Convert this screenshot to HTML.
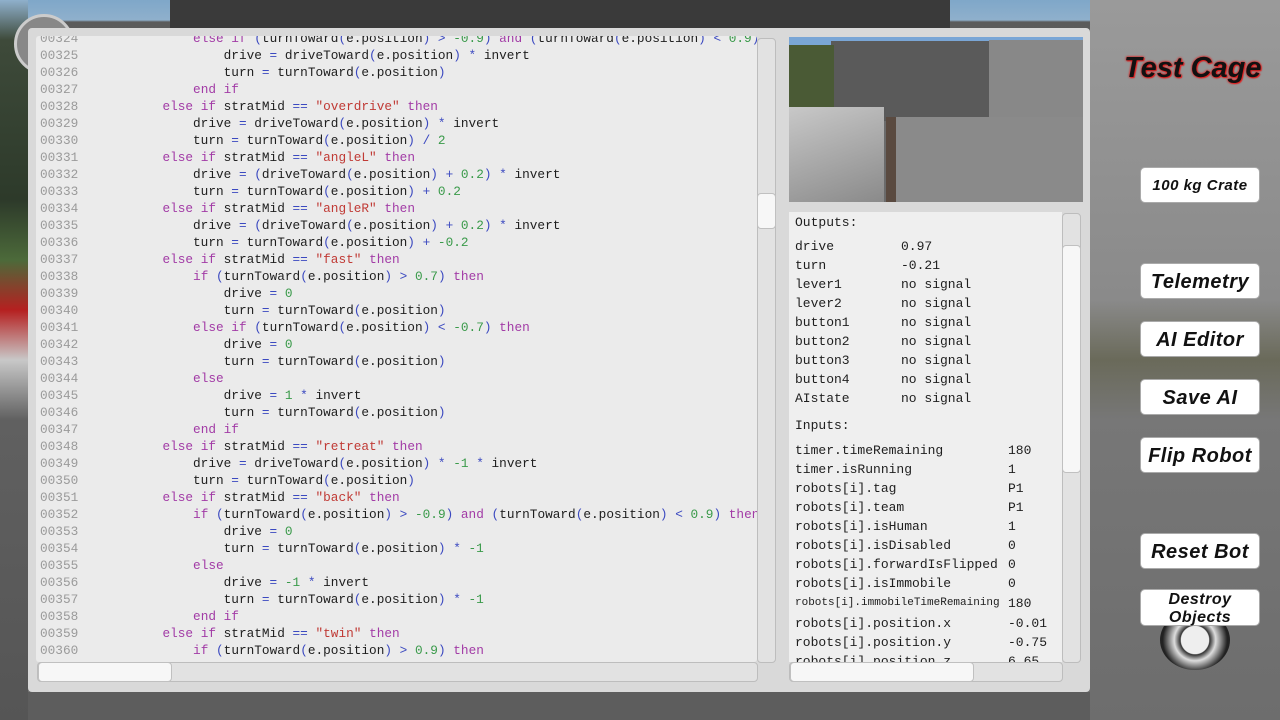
<!DOCTYPE html>
<html><head><meta charset="utf-8"><style>
*{margin:0;padding:0;box-sizing:border-box}
body{width:1280px;height:720px;overflow:hidden;position:relative;font-family:"Liberation Mono",monospace;
background:linear-gradient(180deg,#7fa7c9 0px,#8fb0cc 20px,#5b5b5b 22px,#6a6a6a 280px,#7a7a7a 400px,#6e6e6e 720px);}
.abs{position:absolute}
#bgL{left:0;top:0;width:28px;height:720px;background:linear-gradient(180deg,#8fb0cc 0,#3e4a3a 40px,#2d3a2a 200px,#4c6a3a 260px,#b52020 310px,#c8c8c8 360px,#606060 420px,#555 720px)}
#bgR{left:1090px;top:0;width:190px;height:720px;background:linear-gradient(180deg,#9a9a9a 0,#8a8a8a 300px,#6a6a5a 360px,#777 420px,#6d6d6d 720px)}
#bgB{left:28px;top:692px;width:1062px;height:28px;background:#5d5d5d}
#bgT{left:170px;top:0;width:780px;height:28px;background:#3a3a3a}
#panel{left:28px;top:28px;width:1062px;height:664px;background:#d9d9d9;border-radius:4px}
#code{left:36px;top:36px;width:721px;height:626px;background:#ebebeb;overflow:hidden;border-radius:3px}
pre{position:absolute;left:4px;top:-6px;font-family:"Liberation Mono",monospace;font-size:12.75px;line-height:17px;color:#1e1e1e}
.ln{color:#9a9a9a}.k{color:#a23ba6}.s{color:#c03a35}.n{color:#3a9a4a}.o{color:#3b49c0}
.sb{background:#e2e2e2;border:1px solid #bdbdbd;border-radius:4px}
.th{background:#f7f7f7;border:1px solid #c0c0c0;border-radius:4px}
#out{left:789px;top:212px;width:273px;height:450px;background:#efefef;overflow:hidden;font-size:13px;color:#1e1e1e}
#out div{position:absolute;white-space:pre}
.btn{position:absolute;left:1140px;width:120px;height:36px;background:#fff;border-radius:5px;border:1px solid #aaa;
font-family:"Liberation Sans",sans-serif;font-style:italic;font-weight:bold;color:#111;text-align:center;line-height:36px;font-size:20px;letter-spacing:0.5px}
</style></head><body>
<div class="abs" id="bgL"></div><div class="abs" id="bgR"></div><div class="abs" id="bgB"></div><div class="abs" id="bgT"></div>
<div class="abs" style="left:14px;top:14px;width:60px;height:60px;border-radius:50%;border:3px solid #ccc;background:#888"></div>
<div class="abs" id="panel"></div>
<div class="abs" id="code"><pre><span class="ln">00324</span>               <span class="k">else if</span> <span class="o">(</span>turnToward<span class="o">(</span>e.position<span class="o">)</span> <span class="o">&gt;</span> <span class="n">-0.9</span><span class="o">)</span> <span class="k">and</span> <span class="o">(</span>turnToward<span class="o">(</span>e.position<span class="o">)</span> <span class="o">&lt;</span> <span class="n">0.9</span><span class="o">)</span> <span class="k">then</span>
<span class="ln">00325</span>                   drive <span class="o">=</span> driveToward<span class="o">(</span>e.position<span class="o">)</span> <span class="o">*</span> invert
<span class="ln">00326</span>                   turn <span class="o">=</span> turnToward<span class="o">(</span>e.position<span class="o">)</span>
<span class="ln">00327</span>               <span class="k">end if</span>
<span class="ln">00328</span>           <span class="k">else if</span> stratMid <span class="o">==</span> <span class="s">"overdrive"</span> <span class="k">then</span>
<span class="ln">00329</span>               drive <span class="o">=</span> driveToward<span class="o">(</span>e.position<span class="o">)</span> <span class="o">*</span> invert
<span class="ln">00330</span>               turn <span class="o">=</span> turnToward<span class="o">(</span>e.position<span class="o">)</span> <span class="o">/</span> <span class="n">2</span>
<span class="ln">00331</span>           <span class="k">else if</span> stratMid <span class="o">==</span> <span class="s">"angleL"</span> <span class="k">then</span>
<span class="ln">00332</span>               drive <span class="o">=</span> <span class="o">(</span>driveToward<span class="o">(</span>e.position<span class="o">)</span> <span class="o">+</span> <span class="n">0.2</span><span class="o">)</span> <span class="o">*</span> invert
<span class="ln">00333</span>               turn <span class="o">=</span> turnToward<span class="o">(</span>e.position<span class="o">)</span> <span class="o">+</span> <span class="n">0.2</span>
<span class="ln">00334</span>           <span class="k">else if</span> stratMid <span class="o">==</span> <span class="s">"angleR"</span> <span class="k">then</span>
<span class="ln">00335</span>               drive <span class="o">=</span> <span class="o">(</span>driveToward<span class="o">(</span>e.position<span class="o">)</span> <span class="o">+</span> <span class="n">0.2</span><span class="o">)</span> <span class="o">*</span> invert
<span class="ln">00336</span>               turn <span class="o">=</span> turnToward<span class="o">(</span>e.position<span class="o">)</span> <span class="o">+</span> <span class="n">-0.2</span>
<span class="ln">00337</span>           <span class="k">else if</span> stratMid <span class="o">==</span> <span class="s">"fast"</span> <span class="k">then</span>
<span class="ln">00338</span>               <span class="k">if</span> <span class="o">(</span>turnToward<span class="o">(</span>e.position<span class="o">)</span> <span class="o">&gt;</span> <span class="n">0.7</span><span class="o">)</span> <span class="k">then</span>
<span class="ln">00339</span>                   drive <span class="o">=</span> <span class="n">0</span>
<span class="ln">00340</span>                   turn <span class="o">=</span> turnToward<span class="o">(</span>e.position<span class="o">)</span>
<span class="ln">00341</span>               <span class="k">else if</span> <span class="o">(</span>turnToward<span class="o">(</span>e.position<span class="o">)</span> <span class="o">&lt;</span> <span class="n">-0.7</span><span class="o">)</span> <span class="k">then</span>
<span class="ln">00342</span>                   drive <span class="o">=</span> <span class="n">0</span>
<span class="ln">00343</span>                   turn <span class="o">=</span> turnToward<span class="o">(</span>e.position<span class="o">)</span>
<span class="ln">00344</span>               <span class="k">else</span>
<span class="ln">00345</span>                   drive <span class="o">=</span> <span class="n">1</span> <span class="o">*</span> invert
<span class="ln">00346</span>                   turn <span class="o">=</span> turnToward<span class="o">(</span>e.position<span class="o">)</span>
<span class="ln">00347</span>               <span class="k">end if</span>
<span class="ln">00348</span>           <span class="k">else if</span> stratMid <span class="o">==</span> <span class="s">"retreat"</span> <span class="k">then</span>
<span class="ln">00349</span>               drive <span class="o">=</span> driveToward<span class="o">(</span>e.position<span class="o">)</span> <span class="o">*</span> <span class="n">-1</span> <span class="o">*</span> invert
<span class="ln">00350</span>               turn <span class="o">=</span> turnToward<span class="o">(</span>e.position<span class="o">)</span>
<span class="ln">00351</span>           <span class="k">else if</span> stratMid <span class="o">==</span> <span class="s">"back"</span> <span class="k">then</span>
<span class="ln">00352</span>               <span class="k">if</span> <span class="o">(</span>turnToward<span class="o">(</span>e.position<span class="o">)</span> <span class="o">&gt;</span> <span class="n">-0.9</span><span class="o">)</span> <span class="k">and</span> <span class="o">(</span>turnToward<span class="o">(</span>e.position<span class="o">)</span> <span class="o">&lt;</span> <span class="n">0.9</span><span class="o">)</span> <span class="k">then</span>
<span class="ln">00353</span>                   drive <span class="o">=</span> <span class="n">0</span>
<span class="ln">00354</span>                   turn <span class="o">=</span> turnToward<span class="o">(</span>e.position<span class="o">)</span> <span class="o">*</span> <span class="n">-1</span>
<span class="ln">00355</span>               <span class="k">else</span>
<span class="ln">00356</span>                   drive <span class="o">=</span> <span class="n">-1</span> <span class="o">*</span> invert
<span class="ln">00357</span>                   turn <span class="o">=</span> turnToward<span class="o">(</span>e.position<span class="o">)</span> <span class="o">*</span> <span class="n">-1</span>
<span class="ln">00358</span>               <span class="k">end if</span>
<span class="ln">00359</span>           <span class="k">else if</span> stratMid <span class="o">==</span> <span class="s">"twin"</span> <span class="k">then</span>
<span class="ln">00360</span>               <span class="k">if</span> <span class="o">(</span>turnToward<span class="o">(</span>e.position<span class="o">)</span> <span class="o">&gt;</span> <span class="n">0.9</span><span class="o">)</span> <span class="k">then</span></pre></div>
<div class="abs sb" style="left:757px;top:38px;width:19px;height:625px"></div>
<div class="abs th" style="left:757px;top:193px;width:19px;height:36px"></div>
<div class="abs sb" style="left:37px;top:662px;width:721px;height:20px"></div>
<div class="abs th" style="left:38px;top:662px;width:134px;height:20px"></div>
<div class="abs" style="left:789px;top:37px;width:294px;height:165px;overflow:hidden;background:#6b6b6b">
<div class="abs" style="left:0;top:0;width:294px;height:10px;background:#7aa6d6"></div>
<div class="abs" style="left:42px;top:4px;width:160px;height:80px;background:#5a5a5a"></div>
<div class="abs" style="left:200px;top:3px;width:94px;height:95px;background:#888"></div>
<div class="abs" style="left:0;top:8px;width:45px;height:70px;background:#4a5a35"></div>
<div class="abs" style="left:100px;top:80px;width:194px;height:85px;background:#8a8a8a"></div>
<div class="abs" style="left:0;top:70px;width:95px;height:95px;background:linear-gradient(160deg,#c8c8c8,#8a8a8a)"></div>
<div class="abs" style="left:97px;top:80px;width:10px;height:85px;background:#5a4a40"></div>
</div>
<div class="abs" id="out">
<div style="left:6px;top:3px">Outputs:</div>
<div style="left:6px;top:27px">drive</div><div style="left:112px;top:27px">0.97</div>
<div style="left:6px;top:46px">turn</div><div style="left:112px;top:46px">-0.21</div>
<div style="left:6px;top:65px">lever1</div><div style="left:112px;top:65px">no signal</div>
<div style="left:6px;top:84px">lever2</div><div style="left:112px;top:84px">no signal</div>
<div style="left:6px;top:103px">button1</div><div style="left:112px;top:103px">no signal</div>
<div style="left:6px;top:122px">button2</div><div style="left:112px;top:122px">no signal</div>
<div style="left:6px;top:141px">button3</div><div style="left:112px;top:141px">no signal</div>
<div style="left:6px;top:160px">button4</div><div style="left:112px;top:160px">no signal</div>
<div style="left:6px;top:179px">AIstate</div><div style="left:112px;top:179px">no signal</div>
<div style="left:6px;top:206px">Inputs:</div>
<div style="left:6px;top:231px">timer.timeRemaining</div><div style="left:219px;top:231px">180</div>
<div style="left:6px;top:250px">timer.isRunning</div><div style="left:219px;top:250px">1</div>
<div style="left:6px;top:269px">robots[i].tag</div><div style="left:219px;top:269px">P1</div>
<div style="left:6px;top:288px">robots[i].team</div><div style="left:219px;top:288px">P1</div>
<div style="left:6px;top:307px">robots[i].isHuman</div><div style="left:219px;top:307px">1</div>
<div style="left:6px;top:326px">robots[i].isDisabled</div><div style="left:219px;top:326px">0</div>
<div style="left:6px;top:345px">robots[i].forwardIsFlipped</div><div style="left:219px;top:345px">0</div>
<div style="left:6px;top:364px">robots[i].isImmobile</div><div style="left:219px;top:364px">0</div>
<div style="left:6px;top:385px;font-size:11px">robots[i].immobileTimeRemaining</div><div style="left:219px;top:384px">180</div>
<div style="left:6px;top:404px">robots[i].position.x</div><div style="left:219px;top:404px">-0.01</div>
<div style="left:6px;top:423px">robots[i].position.y</div><div style="left:219px;top:423px">-0.75</div>
<div style="left:6px;top:442px">robots[i].position.z</div><div style="left:219px;top:442px">6.65</div>
</div>
<div class="abs sb" style="left:1062px;top:213px;width:19px;height:450px"></div>
<div class="abs th" style="left:1062px;top:245px;width:19px;height:228px"></div>
<div class="abs sb" style="left:789px;top:662px;width:274px;height:20px"></div>
<div class="abs th" style="left:790px;top:662px;width:184px;height:20px"></div>
<div class="abs" style="left:1124px;top:52px;font-family:'Liberation Sans',sans-serif;font-style:italic;font-weight:bold;font-size:29px;color:#111;text-shadow:0 0 2px #e02020,0 0 2px #e02020,1px 1px 1px #e02020">Test Cage</div>
<div class="btn" style="top:167px;font-size:15px">100 kg Crate</div>
<div class="btn" style="top:263px">Telemetry</div>
<div class="btn" style="top:321px">AI Editor</div>
<div class="btn" style="top:379px">Save AI</div>
<div class="btn" style="top:437px">Flip Robot</div>
<div class="btn" style="top:533px">Reset Bot</div>
<div class="abs" style="left:1160px;top:610px;width:70px;height:60px;border-radius:50%;background:radial-gradient(circle,#eee 30%,#333 32%,#ddd 45%,#222 70%)"></div>
<div class="btn" style="top:589px;height:37px;line-height:18px;font-size:16px;padding-top:1px">Destroy<br>Objects</div>
</body></html>
